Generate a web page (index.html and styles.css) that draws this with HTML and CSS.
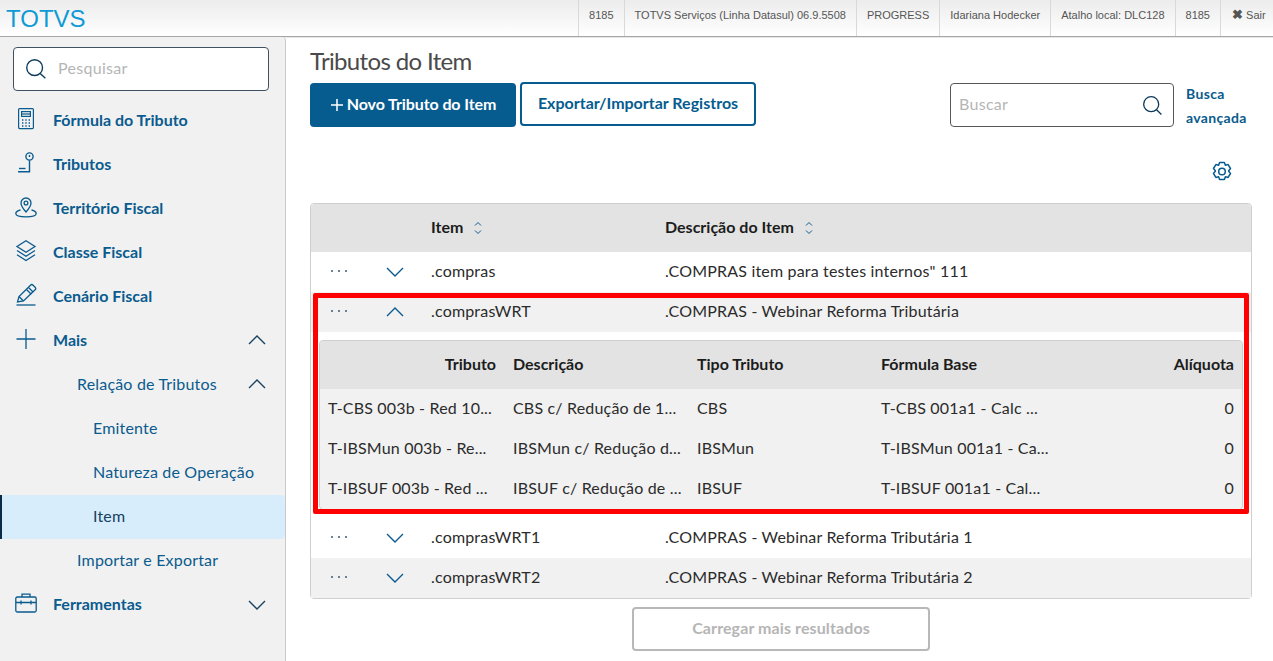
FILE: index.html
```html
<!DOCTYPE html>
<html lang="pt-BR">
<head>
<meta charset="utf-8">
<title>Tributos do Item</title>
<link rel="stylesheet" href="styles.css">
</head>
<body>
<svg class="sprite" width="0" height="0" aria-hidden="true">
  <symbol id="down" viewBox="0 0 20 12"><path d="M2 2l8 8 8-8" fill="none" stroke="currentColor" stroke-width="1.4"/></symbol>
  <symbol id="up" viewBox="0 0 20 12"><path d="M2 10l8-8 8 8" fill="none" stroke="currentColor" stroke-width="1.4"/></symbol>
  <symbol id="search" viewBox="0 0 24 24"><circle cx="10.5" cy="10.5" r="8.6" fill="none" stroke="currentColor" stroke-width="1.5"/><path d="M16.6 16.8l5.6 5.4" fill="none" stroke="currentColor" stroke-width="1.5"/></symbol>
  <symbol id="more" viewBox="0 0 18 4"><circle cx="2" cy="2" r="1" fill="currentColor"/><circle cx="9" cy="2" r="1" fill="currentColor"/><circle cx="16" cy="2" r="1" fill="currentColor"/></symbol>
  <symbol id="sort" viewBox="0 0 8 14"><path d="M1 4.5l3-3 3 3M1 9.5l3 3 3-3" fill="none" stroke="currentColor" stroke-width="1"/></symbol>
</svg>

<header class="topbar">
  <div class="brand">TOTVS</div>
  <ul class="status">
    <li>8185</li>
    <li>TOTVS Serviços (Linha Datasul) 06.9.5508</li>
    <li>PROGRESS</li>
    <li>Idariana Hodecker</li>
    <li>Atalho local: DLC128</li>
    <li>8185</li>
    <li class="exit"><b>✖</b> Sair</li>
  </ul>
</header>

<div class="app">
  <nav class="sidebar">
    <div class="menu-search">
      <svg class="menu-search-icon"><use href="#search"/></svg>
      <span>Pesquisar</span>
    </div>
    <ul class="menu">
      <li class="menu-item top">
        <svg class="mi" viewBox="0 0 24 24" fill="none" stroke="currentColor" stroke-width="1.2"><rect x="4.6" y="1.6" width="14.8" height="20" rx="1"/><rect x="7.6" y="4.6" width="8.8" height="4.8"/><path d="M7.6 7h8.8" /><path d="M8 13h1.4M11.3 13h1.4M14.6 13h1.4M8 16h1.4M11.3 16h1.4M14.6 16h1.4M8 19h1.4M11.3 19h1.4M14.6 19h1.4" stroke-width="1.4"/></svg>
        <span>Fórmula do Tributo</span>
      </li>
      <li class="menu-item top">
        <svg class="mi" viewBox="0 0 24 24" fill="none" stroke="currentColor" stroke-width="1.4"><circle cx="15.5" cy="5.5" r="3.6"/><path d="M15.5 4v2"/><path d="M15.5 9.5v11.2H4"/><path d="M5 17.5h6.5" /></svg>
        <span>Tributos</span>
      </li>
      <li class="menu-item top">
        <svg class="mi" viewBox="0 0 24 24" fill="none" stroke="currentColor" stroke-width="1.3"><path d="M12 17c-3-3.4-5-6-5-9a5 5 0 0 1 10 0c0 3-2 5.600-5 9z"/><circle cx="12" cy="8" r="1.900"/><path d="M6.500 15C3.500 15.700 1.800 17 1.800 18.500c0 2 4.500 3.300 10.200 3.300s10.200-1.300 10.200-3.300c0-1.500-1.700-2.800-4.700-3.500"/></svg>
        <span>Território Fiscal</span>
      </li>
      <li class="menu-item top">
        <svg class="mi" viewBox="0 0 24 24" fill="none" stroke="currentColor" stroke-width="1.3"><path d="M12 1.800l9 5.700-9 5.700-9-5.700z"/><path d="M3 11.500l9 5.700 9-5.700"/><path d="M3 15.800l9 5.700 9-5.700"/></svg>
        <span>Classe Fiscal</span>
      </li>
      <li class="menu-item top">
        <svg class="mi" viewBox="0 0 24 24" fill="none" stroke="currentColor" stroke-width="1.3"><path d="M3.500 19l1.500-5.500L16.500 2.200c.8-.8 1.800-.8 2.600 0l2 2c.8.8.8 1.800 0 2.600L9.500 18z"/><path d="M14.500 4.500l4.800 4.800M12.500 6.500l4.800 4.800M5 13.500l4.500 4.500"/><path d="M2.500 22h19"/></svg>
        <span>Cenário Fiscal</span>
      </li>
      <li class="menu-item top">
        <svg class="mi" viewBox="0 0 24 24" fill="none" stroke="currentColor" stroke-width="1.300"><path d="M12 2v20M2.500 12h19"/></svg>
        <span>Mais</span>
        <svg class="chev up"><use href="#up"/></svg>
      </li>
      <li class="menu-item sub">
        <span>Relação de Tributos</span>
        <svg class="chev up"><use href="#up"/></svg>
      </li>
      <li class="menu-item subsub"><span>Emitente</span></li>
      <li class="menu-item subsub"><span>Natureza de Operação</span></li>
      <li class="menu-item subsub active"><span>Item</span></li>
      <li class="menu-item sub"><span>Importar e Exportar</span></li>
      <li class="menu-item top">
        <svg class="mi" viewBox="0 0 24 24" fill="none" stroke="currentColor" stroke-width="1.300"><rect x="1.800" y="6" width="20.400" height="15" rx="1.500"/><path d="M8 6V3.200h8V6M2 11.500h20M7 9.500v4M17 9.500v4"/></svg>
        <span>Ferramentas</span>
        <svg class="chev"><use href="#down"/></svg>
      </li>
    </ul>
  </nav>

  <main class="content">
    <h1 class="title">Tributos do Item</h1>
    <div class="toolbar">
      <button class="btn primary"><svg class="plus" viewBox="0 0 12 12"><path d="M6 0v12M0 6h12" fill="none" stroke="currentColor" stroke-width="1.500"/></svg>Novo Tributo do Item</button>
      <button class="btn outline">Exportar/Importar Registros</button>
      <div class="search">
        <span>Buscar</span>
        <svg class="search-icon"><use href="#search"/></svg>
      </div>
      <a class="advanced">Busca<br>avançada</a>
    </div>
    <div class="settings-row">
      <svg class="gear" viewBox="0 0 24 24" fill="none" stroke="currentColor" stroke-width="1.500"><path d="M9.600 2.500h4.800l1 2.700 2.700-.6 2.400 3.900-1.800 2.200v.6l1.800 2.200-2.400 3.900-2.700-.6-1 2.700H9.600l-1-2.700-2.700.6-2.400-3.900 1.800-2.200v-.6L3.500 8.500l2.400-3.900 2.700.6z" stroke-linejoin="round"/><circle cx="12" cy="11.500" r="3.300"/></svg>
    </div>

    <section class="grid">
      <div class="row head">
        <div class="c-item">Item <svg class="sort"><use href="#sort"/></svg></div>
        <div class="c-desc">Descrição do Item <svg class="sort"><use href="#sort"/></svg></div>
      </div>
      <div class="row">
        <svg class="dots"><use href="#more"/></svg><svg class="toggle"><use href="#down"/></svg>
        <div class="c-item">.compras</div><div class="c-desc">.COMPRAS item para testes internos" 111</div>
      </div>
      <div class="row alt">
        <svg class="dots"><use href="#more"/></svg><svg class="toggle"><use href="#up"/></svg>
        <div class="c-item">.comprasWRT</div><div class="c-desc">.COMPRAS - Webinar Reforma Tributária</div>
      </div>
      <div class="detail">
        <div class="inner">
          <div class="irow ihead">
            <div class="num first">Tributo</div><div>Descrição</div><div>Tipo Tributo</div><div>Fórmula Base</div><div class="num">Alíquota</div>
          </div>
          <div class="irow">
            <div>T-CBS 003b - Red 10...</div><div>CBS c/ Redução de 1...</div><div>CBS</div><div>T-CBS 001a1 - Calc ...</div><div class="num">0</div>
          </div>
          <div class="irow">
            <div>T-IBSMun 003b - Re...</div><div>IBSMun c/ Redução d...</div><div>IBSMun</div><div>T-IBSMun 001a1 - Ca...</div><div class="num">0</div>
          </div>
          <div class="irow">
            <div>T-IBSUF 003b - Red ...</div><div>IBSUF c/ Redução de ...</div><div>IBSUF</div><div>T-IBSUF 001a1 - Cal...</div><div class="num">0</div>
          </div>
        </div>
      </div>
      <div class="row">
        <svg class="dots"><use href="#more"/></svg><svg class="toggle"><use href="#down"/></svg>
        <div class="c-item">.comprasWRT1</div><div class="c-desc">.COMPRAS - Webinar Reforma Tributária 1</div>
      </div>
      <div class="row alt">
        <svg class="dots"><use href="#more"/></svg><svg class="toggle"><use href="#down"/></svg>
        <div class="c-item">.comprasWRT2</div><div class="c-desc">.COMPRAS - Webinar Reforma Tributária 2</div>
      </div>
      <div class="highlight"></div>
    </section>
    <div class="load"><button class="btn-load">Carregar mais resultados</button></div>
  </main>
</div>
</body>
</html>
```

FILE: styles.css
```css
* { box-sizing: border-box; }
html, body { margin: 0; height: 100%; }
body {
  height: 661px;
  overflow: hidden;
  background: #fff;
  font-family: "Lato", "Open Sans", sans-serif;
  color: #1c1c1c;
}
.sprite { position: absolute; }

/* top bar */
.topbar {
  height: 37px;
  display: flex;
  justify-content: space-between;
  background: linear-gradient(#ececec, #ffffff);
  border-bottom: 1px solid #a6a6a6;
  box-shadow: 0 1px 0 #e8e8e8;
}
.brand {
  padding-left: 6px;
  font: 24px/37px "Liberation Sans", Arial, sans-serif;
  color: #0f9ad6;
}
.status {
  display: flex;
  list-style: none;
  margin: 0;
  padding: 0;
  font: 11px/30px "Liberation Sans", Arial, sans-serif;
  color: #555;
}
.status li {
  height: 36px;
  padding: 0 10px;
  border-left: 1px solid #d9d9d9;
}
.status .exit { width: 53px; padding: 0 0 0 11px; }
.exit b { font-size: 13px; line-height: 13px; color: #555; }

/* layout */
.app { display: flex; height: 624px; }
.sidebar {
  width: 286px;
  flex: none;
  background: #f1f1f1;
  border-right: 1px solid #c9c9c9;
  border-top-right-radius: 4px;
  padding-top: 10px;
}
.menu-search {
  margin: 0 16px 0 13px;
  height: 44px;
  display: flex;
  align-items: center;
  gap: 11px;
  padding-left: 11px;
  background: #fff;
  border: 1px solid #3f5263;
  border-radius: 4px;
  font-size: 16px;
  letter-spacing: .3px;
  color: #b5b5b5;
}
.menu-search span { margin-bottom: 4px; }
.menu-search-icon { width: 22px; height: 22px; color: #0b3a5c; }
.menu { list-style: none; margin: 8px 0 0; padding: 0; }
.menu-item {
  height: 44px;
  display: flex;
  align-items: center;
  font-size: 16px;
  color: #0a5b8e;
  position: relative;
  letter-spacing: .18px;
}
.menu-item > span { margin-bottom: 4px; }
.menu-item.top { font-weight: 700; padding-left: 14px; letter-spacing: 0; }
.menu-item.sub { padding-left: 77px; }
.menu-item.subsub { padding-left: 93px; }
.menu-item.active {
  background: #d7edfb;
  color: #17415f;
  border-left: 2px solid #0b2c46;
  padding-left: 91px;
  border-radius: 0 4px 4px 0;
}
.mi { width: 24px; height: 24px; margin: 0 15px 4px 0; flex: none; }
.chev { width: 20px; height: 12px; position: absolute; right: 18px; top: 16px; color: #17415f; }
.chev.up { top: 15px; }

/* content */
.content { flex: 1; padding: 10px 21px 0 24px; min-width: 0; }
.title {
  margin: 0;
  height: 30px;
  font-size: 24px;
  line-height: 28px;
  font-weight: 400;
  letter-spacing: -.65px;
  color: #4a4a4a;
}
.toolbar {
  display: flex;
  align-items: flex-start;
  margin-top: 5px;
  height: 46px;
}
.btn {
  font-family: inherit;
  font-size: 16px;
  font-weight: 700;
  border-radius: 4px;
  padding: 0 0 4px;
  cursor: pointer;
}
.primary {
  width: 206px;
  height: 44px;
  margin-top: 1px;
  background: #065c8f;
  border: 0;
  color: #fff;
  letter-spacing: -.1px;
}
.plus { width: 12px; height: 12px; margin-right: 5px; vertical-align: -1px; transform: translateX(1px); }
.outline {
  width: 236px;
  height: 44px;
  margin-left: 4px;
  background: #fff;
  border: 2px solid #065c8f;
  color: #065c8f;
}
.search {
  width: 224px;
  height: 44px;
  margin: 1px 0 0 194px;
  display: flex;
  align-items: center;
  justify-content: space-between;
  padding: 0 10px 0 8px;
  border: 1px solid #55585b;
  border-radius: 4px;
  font-size: 16px;
  letter-spacing: .3px;
  color: #b5b5b5;
}
.search span { margin-bottom: 4px; }
.search-icon { width: 21px; height: 21px; color: #0b3a5c; }
.advanced {
  margin-left: 12px;
  font-size: 14px;
  font-weight: 700;
  letter-spacing: .33px;
  line-height: 24px;
  color: #0a5b8e;
}
.settings-row {
  display: flex;
  justify-content: flex-end;
  height: 75px;
  padding: 32px 18px 0 0;
}
.gear { width: 24px; height: 24px; color: #065c8f; }

/* grid */
.grid {
  position: relative;
  width: 942px;
  border: 1px solid #cfcfcf;
  border-radius: 4px;
}
.row {
  height: 40px;
  display: flex;
  align-items: center;
  font-size: 16px;
  letter-spacing: .18px;
  position: relative;
  color: #2b2b2b;
}
.row.head {
  height: 48px;
  background: #e3e3e3;
  font-weight: 700;
  letter-spacing: 0;
  color: #1c1c1c;
  border-radius: 4px 4px 0 0;
}
.row.alt { background: #f1f1f1; }
.dots { width: 18px; height: 4px; margin: -2px 0 0 19px; color: #3e5a70; flex: none; }
.toggle { width: 20px; height: 12px; margin-left: 37px; color: #0a5b8e; flex: none; }
.c-item { position: absolute; left: 120px; top: 9px; }
.c-desc { position: absolute; left: 354px; top: 9px; }
.head .c-item, .head .c-desc { top: 13px; }
.sort { width: 8px; height: 14px; margin-left: 7px; color: #0a5b8e; vertical-align: -2px; }

/* nested grid */
.detail { height: 186px; padding: 8px; }
.inner {
  height: 170px;
  border: 1px solid #cfcfcf;
  border-radius: 4px;
  background: #f1f1f1;
}
.irow {
  height: 40px;
  display: grid;
  grid-template-columns: 185px 184px 184px 184px 1fr;
  align-items: center;
  font-size: 16px;
  letter-spacing: .18px;
  white-space: nowrap;
  color: #2b2b2b;
}
.irow > div { padding: 0 0 4px 8px; overflow: hidden; }
.irow > .num { text-align: right; padding: 0 8px 4px 0; }
.irow > .first { padding-right: 9px; }
.ihead {
  height: 48px;
  background: #e3e3e3;
  font-weight: 700;
  letter-spacing: 0;
  color: #1c1c1c;
  border-radius: 4px 4px 0 0;
}
.highlight {
  position: absolute;
  left: 2px;
  top: 89px;
  width: 936px;
  height: 221px;
  border: 5px solid #ff0000;
  border-radius: 2px;
  pointer-events: none;
}

/* load more */
.load { display: flex; justify-content: center; padding-top: 8px; width: 942px; }
.btn-load {
  width: 298px;
  height: 44px;
  padding: 0 0 4px;
  background: #fff;
  border: 2px solid #b8b8b8;
  border-radius: 4px;
  font-family: inherit;
  font-size: 16px;
  letter-spacing: .1px;
  font-weight: 700;
  color: #b5b5b5;
}
```
